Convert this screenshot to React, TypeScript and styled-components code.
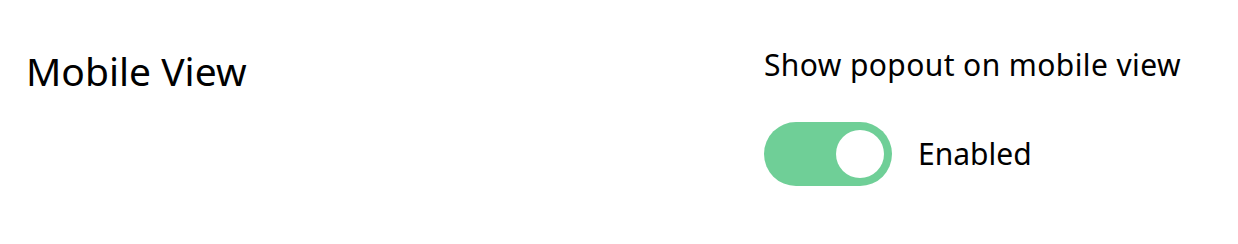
import styled, { createGlobalStyle } from "styled-components";

const GlobalStyle = createGlobalStyle`
  html, body {
    margin: 0;
    padding: 0;
    background: #ffffff;
  }
  body {
    font-family: "Noto Sans", Lato, sans-serif;
    color: #000000;
  }
`;

export default function App() {
  return (
    <>
      <GlobalStyle />
      <Section>
        <SectionTitle>Mobile View</SectionTitle>
        <Setting>
          <SettingLabel>Show popout on mobile view</SettingLabel>
          <ToggleRow>
            <Toggle $on={true} role="switch" aria-checked="true">
              <Knob />
            </Toggle>
            <ToggleText>Enabled</ToggleText>
          </ToggleRow>
        </Setting>
      </Section>
    </>
  );
}

const Section = styled.div`
  display: grid;
  grid-template-columns: 738px 1fr;
  padding: 47px 0 0 26px;
  height: 244px;
  box-sizing: border-box;
`;

const SectionTitle = styled.h2`
  margin: 0;
  font-size: 39px;
  font-weight: 400;
  line-height: 48px;
`;

const Setting = styled.div`
  display: flex;
  flex-direction: column;
`;

const SettingLabel = styled.div`
  font-size: 30px;
  line-height: 36px;
  letter-spacing: 0.4px;
`;

const ToggleRow = styled.div`
  display: flex;
  align-items: center;
  gap: 26px;
  margin-top: 39px;
`;

const Toggle = styled.div<{ $on: boolean }>`
  width: 128px;
  height: 64px;
  border-radius: 32px;
  background: ${(p) => (p.$on ? "#6fcf97" : "#d9d9d9")};
  display: flex;
  align-items: center;
  justify-content: ${(p) => (p.$on ? "flex-end" : "flex-start")};
  padding: 0 8px;
  box-sizing: border-box;
`;

const Knob = styled.div`
  width: 48px;
  height: 48px;
  border-radius: 50%;
  background: #ffffff;
`;

const ToggleText = styled.span`
  font-size: 30px;
  line-height: 36px;
`;
